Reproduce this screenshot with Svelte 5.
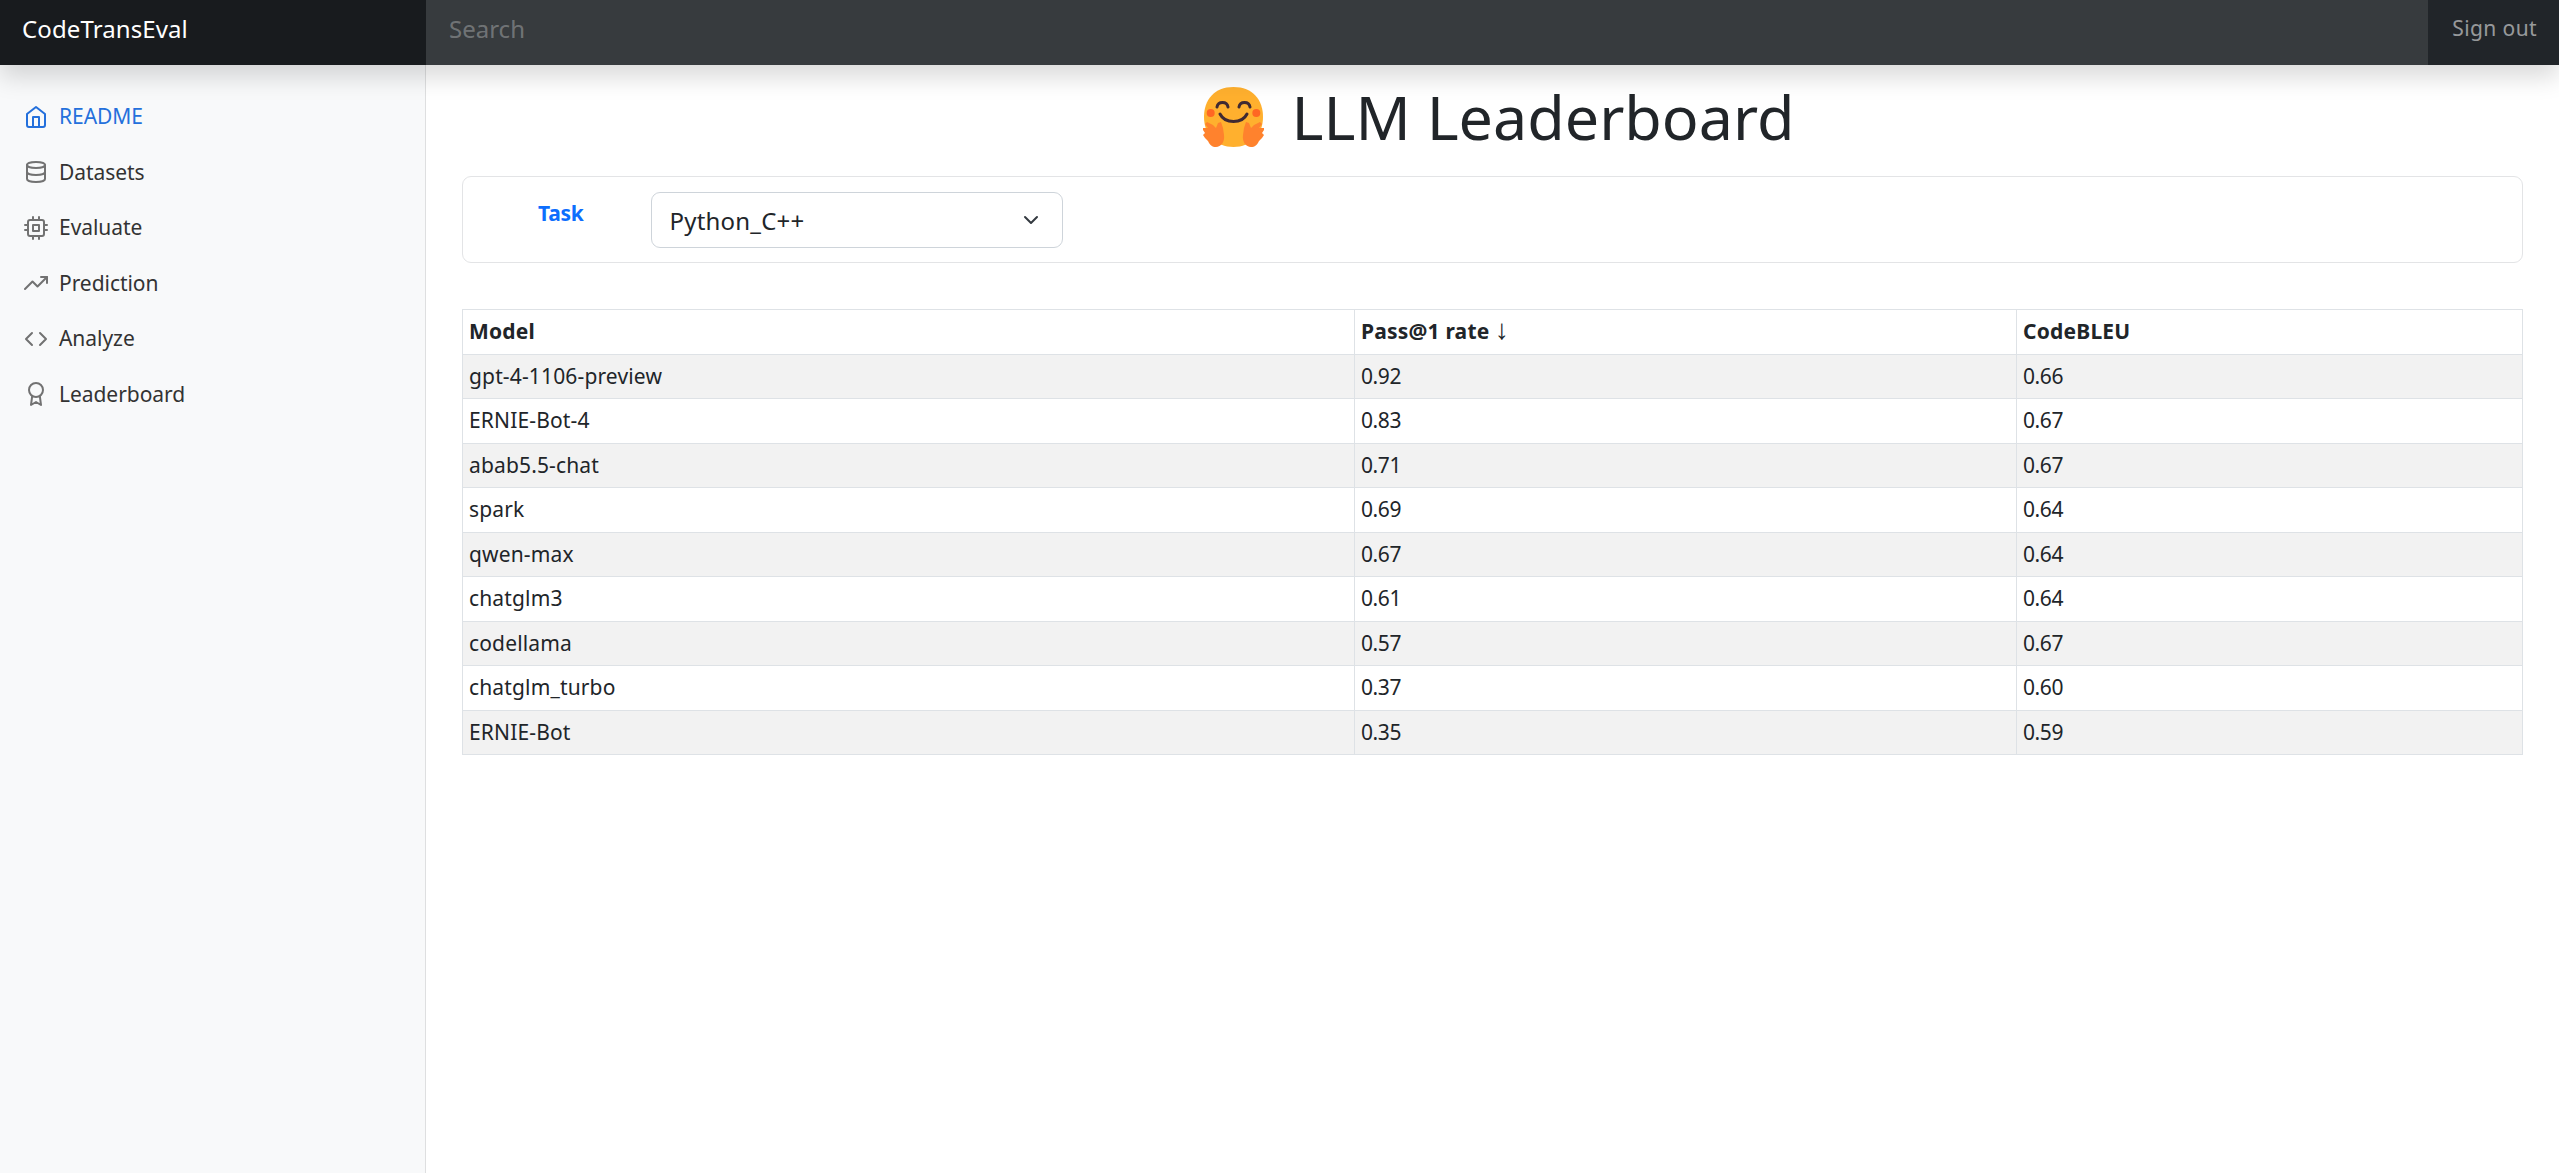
<script>
  const navItems = [
    { label: "README", icon: "home", active: true },
    { label: "Datasets", icon: "database" },
    { label: "Evaluate", icon: "cpu" },
    { label: "Prediction", icon: "trending" },
    { label: "Analyze", icon: "code" },
    { label: "Leaderboard", icon: "award" }
  ];

  const rows = [
    ["gpt-4-1106-preview", "0.92", "0.66"],
    ["ERNIE-Bot-4", "0.83", "0.67"],
    ["abab5.5-chat", "0.71", "0.67"],
    ["spark", "0.69", "0.64"],
    ["qwen-max", "0.67", "0.64"],
    ["chatglm3", "0.61", "0.64"],
    ["codellama", "0.57", "0.67"],
    ["chatglm_turbo", "0.37", "0.60"],
    ["ERNIE-Bot", "0.35", "0.59"]
  ];
</script>

<header class="navbar">
  <a class="brand" href="#top">CodeTransEval</a>
  <input class="search" type="text" placeholder="Search" aria-label="Search" />
  <a class="signout" href="#top">Sign out</a>
</header>

<div class="layout">
  <nav class="sidebar">
    <ul>
      {#each navItems as item}
        <li>
          <a href="#top" class:active={item.active}>
            <svg class="feather" viewBox="0 0 24 24" width="24" height="24">
              {#if item.icon === "home"}
                <path d="M3 9l9-7 9 7v11a2 2 0 0 1-2 2H5a2 2 0 0 1-2-2z" />
                <polyline points="9 22 9 12 15 12 15 22" />
              {:else if item.icon === "database"}
                <ellipse cx="12" cy="5" rx="9" ry="3" />
                <path d="M21 12c0 1.66-4 3-9 3s-9-1.34-9-3" />
                <path d="M3 5v14c0 1.66 4 3 9 3s9-1.34 9-3V5" />
              {:else if item.icon === "cpu"}
                <rect x="4" y="4" width="16" height="16" rx="2" ry="2" />
                <rect x="9" y="9" width="6" height="6" />
                <path d="M9 1v3M15 1v3M9 20v3M15 20v3M20 9h3M20 14h3M1 9h3M1 14h3" />
              {:else if item.icon === "trending"}
                <polyline points="23 6 13.5 15.5 8.5 10.5 1 18" />
                <polyline points="17 6 23 6 23 12" />
              {:else if item.icon === "code"}
                <polyline points="16 18 22 12 16 6" />
                <polyline points="8 6 2 12 8 18" />
              {:else if item.icon === "award"}
                <circle cx="12" cy="8" r="7" />
                <polyline points="8.21 13.89 7 23 12 20 17 23 15.79 13.88" />
              {/if}
            </svg>
            {item.label}
          </a>
        </li>
      {/each}
    </ul>
  </nav>

  <main class="content">
    <h1>
      <!-- hugging face emoji, no emoji font in the sandbox -->
      <svg class="emoji" viewBox="0 0 63 60" width="63" height="60" aria-hidden="true">
        <path fill="#ffb02e" d="M31.500 0C12 0 2 13 2 30c0 18 12 30 29.500 30S61 48 61 30C61 13 51 0 31.500 0z" />
        <circle cx="8.700" cy="26" r="4" fill="#ff6723" />
        <circle cx="54.300" cy="26" r="4" fill="#ff6723" />
        <path class="face" d="M15 20c1-6 10-6 11 0M37 20c1-6 10-6 11 0" />
        <path class="face" d="M18 27c5 10 22 10 27 0" />
        <path fill="#ff822d" d="M1 41l5 0-3-4 2-2 6 3 3 3 2-5 3-1 2 6 1 7c1 7-3 12-8 12-4 0-6-2-8-6l-3-3-2-3 2-2-2-3z" />
        <path fill="#ff822d" d="M62 41l-5 0 3-4-2-2-6 3-3 3-2-5-3-1-2 6-1 7c-1 7 3 12 8 12 4 0 6-2 8-6l3-3 2-3-2-2 2-3z" />
      </svg>
      <span>LLM Leaderboard</span>
    </h1>

    <section class="filter">
      <div class="filter-label">Task</div>
      <div class="select-wrap">
        <select aria-label="Task">
          <option>Python_C++</option>
        </select>
        <svg class="chevron" viewBox="0 0 16 16" width="16" height="16">
          <path d="M2 5l6 6 6-6" />
        </svg>
      </div>
    </section>

    <table>
      <colgroup>
        <col class="col-model" />
        <col class="col-pass" />
        <col />
      </colgroup>
      <thead>
        <tr>
          <th>Model</th>
          <th>Pass@1 rate <span class="arrow">↓</span></th>
          <th>CodeBLEU</th>
        </tr>
      </thead>
      <tbody>
        {#each rows as row}
          <tr>
            {#each row as cell, i}
              <td class:num={i > 0}>{cell}</td>
            {/each}
          </tr>
        {/each}
      </tbody>
    </table>
  </main>
</div>

<style>
  :global(body) {
    margin: 0;
    height: 100vh;
    overflow: hidden;
    background: #fff;
    color: #212529;
    font-family: "Noto Sans", "Open Sans", sans-serif;
    font-size: 24px;
  }

  .navbar {
    position: relative;
    z-index: 2;
    display: flex;
    height: 65px;
    background: #212529;
    box-shadow: 0 12px 24px rgba(0, 0, 0, 0.15);
  }

  .brand {
    width: 404px;
    padding-left: 22px;
    background: rgba(0, 0, 0, 0.25);
    color: #fff;
    font-size: 24px;
    line-height: 57px;
    letter-spacing: 0.1px;
    text-decoration: none;
  }

  .search {
    flex: 1;
    min-width: 0;
    padding: 0 23px 9px;
    border: 0;
    outline: 0;
    background: rgba(255, 255, 255, 0.1);
    color: #fff;
    font: inherit;
  }

  .search::placeholder {
    color: rgba(255, 255, 255, 0.3);
  }

  .signout {
    padding: 0 22px 0 24px;
    color: rgba(255, 255, 255, 0.55);
    font-size: 21px;
    line-height: 57px;
    letter-spacing: 0.4px;
    text-decoration: none;
  }

  .layout {
    display: flex;
    height: calc(100vh - 65px);
  }

  .sidebar {
    flex: 0 0 426px;
    box-sizing: border-box;
    padding-top: 24px;
    background: #f8f9fa;
    box-shadow: inset -1px 0 0 rgba(0, 0, 0, 0.1);
  }

  .sidebar ul {
    margin: 0;
    padding: 0;
    list-style: none;
  }

  .sidebar a {
    display: flex;
    align-items: center;
    padding: 12px 24px;
    color: #333;
    font-size: 21px;
    line-height: 31.5px;
    letter-spacing: -0.05px;
    text-decoration: none;
  }

  .sidebar a.active {
    color: #2470dc;
  }

  .feather {
    flex: none;
    margin-right: 11px;
    fill: none;
    stroke: #727272;
    stroke-width: 2;
    stroke-linecap: round;
    stroke-linejoin: round;
  }

  .active .feather {
    stroke: #2470dc;
  }

  .content {
    flex: 1;
    min-width: 0;
    padding: 0 36px;
  }

  h1 {
    display: flex;
    justify-content: center;
    align-items: center;
    gap: 27px;
    height: 104px;
    margin: 0 0 7px;
    padding-left: 11px;
    font-size: 61px;
    font-weight: 400;
    line-height: 72px;
  }

  .face {
    fill: none;
    stroke: #402a32;
    stroke-width: 3;
    stroke-linecap: round;
  }

  .filter {
    display: flex;
    box-sizing: border-box;
    height: 87px;
    padding: 15px 0;
    border: 1.5px solid #e3e4e6;
    border-radius: 9px;
  }

  .filter-label {
    box-sizing: border-box;
    width: 187.5px;
    padding: 5px 0 0 75px;
    color: #0d6efd;
    font-size: 21px;
    font-weight: 700;
    line-height: 32px;
    letter-spacing: -0.3px;
  }

  .select-wrap {
    position: relative;
    width: 412px;
  }

  select {
    appearance: none;
    box-sizing: border-box;
    width: 100%;
    height: 56px;
    padding: 0 54px 0 18px;
    border: 1.5px solid #ced4da;
    border-radius: 9px;
    background: #fff;
    color: #212529;
    font: inherit;
    letter-spacing: 0.2px;
  }

  .chevron {
    position: absolute;
    top: 20px;
    right: 24px;
    fill: none;
    stroke: #343a40;
    stroke-width: 2;
    stroke-linecap: round;
    stroke-linejoin: round;
    pointer-events: none;
  }

  table {
    width: 100%;
    margin-top: 46px;
    border-collapse: collapse;
    table-layout: fixed;
    font-size: 21px;
    line-height: 31.5px;
    letter-spacing: 0.15px;
  }

  .col-model {
    width: 892px;
  }

  .col-pass {
    width: 662px;
  }

  th,
  td {
    padding: 6px;
    border: 1.5px solid #dee2e6;
    text-align: left;
  }

  th {
    letter-spacing: 0.2px;
  }

  td.num {
    letter-spacing: -0.4px;
  }

  .arrow {
    font-family: "Liberation Sans", sans-serif;
    font-size: 28px;
    font-weight: 400;
    line-height: 0;
  }

  tbody tr:nth-child(odd) {
    background: #f2f2f2;
  }
</style>
